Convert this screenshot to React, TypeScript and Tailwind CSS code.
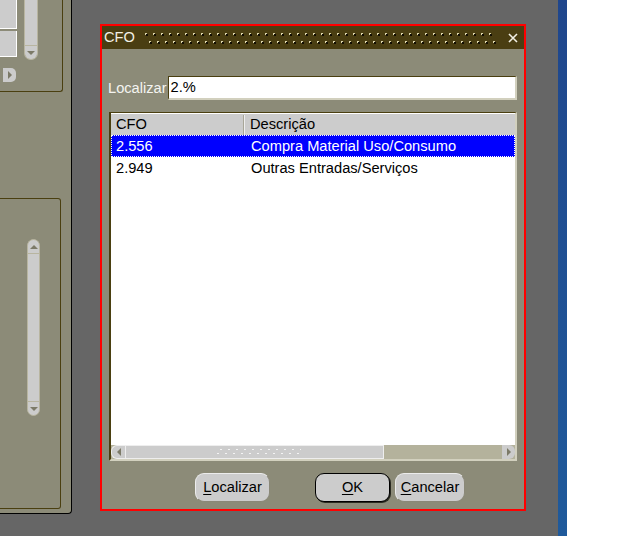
const OLIVE = "border-[#4a3f10]";

function TriDown() {
  return <div className="h-0 w-0 border-x-[4px] border-t-[4px] border-x-transparent border-t-[#7c7a68]" />;
}

function TriUp() {
  return <div className="h-0 w-0 border-x-[4px] border-b-[4px] border-x-transparent border-b-[#7c7a68]" />;
}

function TriRight() {
  return <div className="h-0 w-0 border-y-[4px] border-l-[4px] border-y-transparent border-l-[#7c7a68]" />;
}

function TriLeft() {
  return <div className="h-0 w-0 border-y-[4px] border-r-[4px] border-y-transparent border-r-[#7c7a68]" />;
}

function Grip({ width }: { width: number }) {
  return (
    <svg width={width} height={6} className="block">
      <defs>
        <pattern id="grip" width="8" height="6" patternUnits="userSpaceOnUse">
          <rect x="3" y="0" width="2" height="1" fill="#f4f4f4" />
          <rect x="0" y="4" width="2" height="1" fill="#f4f4f4" />
        </pattern>
      </defs>
      <rect width={width} height={6} fill="url(#grip)" />
    </svg>
  );
}

function TitleDots() {
  return (
    <svg width={352} height={11} className="block">
      <defs>
        <pattern id="tdots" width="8" height="11" patternUnits="userSpaceOnUse">
          <rect x="0" y="0" width="2" height="1" fill="#ddd6ae" />
          <rect x="0" y="1" width="1" height="1" fill="#ddd6ae" />
          <rect x="1" y="1" width="2" height="2" fill="#120e02" />
          <rect x="4" y="8" width="2" height="1" fill="#ddd6ae" />
          <rect x="4" y="9" width="1" height="1" fill="#ddd6ae" />
          <rect x="5" y="9" width="2" height="2" fill="#120e02" />
        </pattern>
      </defs>
      <rect width={352} height={11} fill="url(#tdots)" />
    </svg>
  );
}

function LeftPanel() {
  return (
    <div className="w-[72px] shrink-0">
      <div className="h-[514px] rounded-br-[4px] border-b border-r border-black bg-[#8c8b78]">
        <div className={`h-[92px] w-[63px] rounded-br-[3px] border-b border-r ${OLIVE}`}>
          <div className="flex gap-[7px]">
            <div className="flex w-[17px] flex-col">
              <div className="h-[29px] border-b border-r border-white bg-[#cccccc]" />
              <div className="mt-[2px] h-[26px] border-b border-r border-white bg-[#cccccc]" />
              <div className="ml-[3px] mt-[11px] flex h-[14px] w-[13px] items-center justify-center rounded-r-[5px] bg-[#cccccc]">
                <TriRight />
              </div>
            </div>
            <div className="flex h-[60px] w-[14px] flex-col justify-end rounded-b-full border-x border-b border-[#b8b5a0] bg-[#cccccc]">
              <div className="flex h-[14px] items-center justify-center border-t border-[#b8b5a0]">
                <TriDown />
              </div>
            </div>
          </div>
        </div>
        <div className={`mt-[106px] h-[311px] w-[61px] rounded-r-[3px] border-y border-r ${OLIVE}`}>
          <div className="ml-[27px] mt-[40px] flex h-[177px] w-[13px] flex-col justify-between rounded-full border border-[#b8b5a0] bg-[#cccccc]">
            <div className="flex h-[14px] items-center justify-center border-b border-[#b8b5a0]">
              <TriUp />
            </div>
            <div className="flex h-[14px] items-center justify-center border-t border-[#b8b5a0]">
              <TriDown />
            </div>
          </div>
        </div>
      </div>
    </div>
  );
}

function Button({
  label,
  width,
  isDefault,
}: {
  label: string;
  width: number;
  isDefault?: boolean;
}) {
  const first = label.charAt(0);
  const rest = label.slice(1);
  return (
    <button
      type="button"
      style={{ width }}
      className={`flex h-[29px] items-center justify-center rounded-[9px] bg-[#cccccc] pt-px text-black ${
        isDefault
          ? "border border-black shadow-[1px_1px_0_#2a2a20]"
          : "border-l border-t border-[#ececec] border-b-[#8a8878] border-r-[#8a8878] border-b border-r"
      }`}
    >
      <span className="underline decoration-1 underline-offset-2">{first}</span>
      {rest}
    </button>
  );
}

function CfoDialog() {
  const rows = [
    { cfo: "2.556", desc: "Compra Material Uso/Consumo", selected: true },
    { cfo: "2.949", desc: "Outras Entradas/Serviços", selected: false },
  ];

  return (
    <div className="flex h-[487px] w-[426px] flex-col border-2 border-[#ff0000] bg-[#8c8b78]">
      <div className="flex h-[23px] shrink-0 items-center bg-[#4a3e12] pl-[2px] pr-[4px] text-[#f2f0e4]">
        <span className="leading-none">CFO</span>
        <div className="ml-[10px] mt-[1px]">
          <TitleDots />
        </div>
        <svg width="10" height="10" viewBox="0 0 10 10" className="ml-auto mr-[2px]">
          <path d="M1 1 L9 9 M9 1 L1 9" stroke="#f2f0e4" strokeWidth="1.6" />
        </svg>
      </div>

      <div className="flex flex-1 flex-col">
        <div className="mt-[27px] flex items-center pl-[6px] pr-[7px]">
          <span className="pt-px text-[#f4f4f0]">Localizar</span>
          <div
            className={`ml-[1px] flex h-[24px] flex-1 items-center border-l border-t ${OLIVE} border-b-2 border-r-2 border-b-[#d2d0be] border-r-[#d2d0be] bg-white pl-[2px] pt-px text-black`}
          >
            2.%
          </div>
        </div>

        <div
          className={`ml-[7px] mr-[7px] mt-[12px] flex h-[349px] flex-col border-l-2 border-t ${OLIVE} border-b-2 border-r-2 border-b-[#d2d0be] border-r-[#d2d0be] bg-white`}
        >
          <div className="flex h-[22px] shrink-0 border-t border-white bg-[#cccccc] pt-px text-black">
            <div className="flex w-[133px] items-center border-r border-[#a8a698] pl-[5px]">CFO</div>
            <div className="flex flex-1 items-center border-l border-[#eeeeee] pl-[5px]">Descrição</div>
          </div>
          <div className="flex-1">
            {rows.map((r) => (
              <div
                key={r.cfo}
                className={`flex h-[22px] items-center pt-[2px] ${
                  r.selected
                    ? "border border-dotted border-white bg-[#0000ff] text-white"
                    : "border border-transparent text-black"
                }`}
              >
                <div className="w-[134px] pl-[4px]">{r.cfo}</div>
                <div className="pl-[5px]">{r.desc}</div>
              </div>
            ))}
          </div>
          <div className="flex h-[14px] shrink-0 bg-[#b4b29c]">
            <div className="flex w-[14px] items-center justify-center rounded-l-[6px] border-y border-l border-[#eeeeee] bg-[#cccccc]">
              <TriLeft />
            </div>
            <div className="flex w-[259px] items-center justify-center border border-[#eeeeee] bg-[#cccccc] pl-[8px]">
              <Grip width={84} />
            </div>
            <div className="flex-1" />
            <div className="flex w-[13px] items-center justify-center rounded-r-[6px] bg-[#cccccc]">
              <TriRight />
            </div>
          </div>
        </div>

        <div className="ml-[93px] mt-[12px] flex">
          <Button label="Localizar" width={75} />
          <div className="ml-[45px]">
            <Button label="OK" width={75} isDefault />
          </div>
          <div className="ml-[5px]">
            <Button label="Cancelar" width={70} />
          </div>
        </div>
      </div>
    </div>
  );
}

export default function App() {
  return (
    <div className="flex h-[536px] w-[626px] overflow-hidden bg-[#666666] font-['Liberation_Sans',Arial,sans-serif] text-[14.65px]">
      <LeftPanel />
      <div className="w-[486px] shrink-0 pl-[28px] pt-[24px]">
        <CfoDialog />
      </div>
      <div className="w-[9px] shrink-0 bg-gradient-to-b from-[#1f468c] to-[#1f5a9b]" />
      <div className="flex-1 bg-white" />
    </div>
  );
}
